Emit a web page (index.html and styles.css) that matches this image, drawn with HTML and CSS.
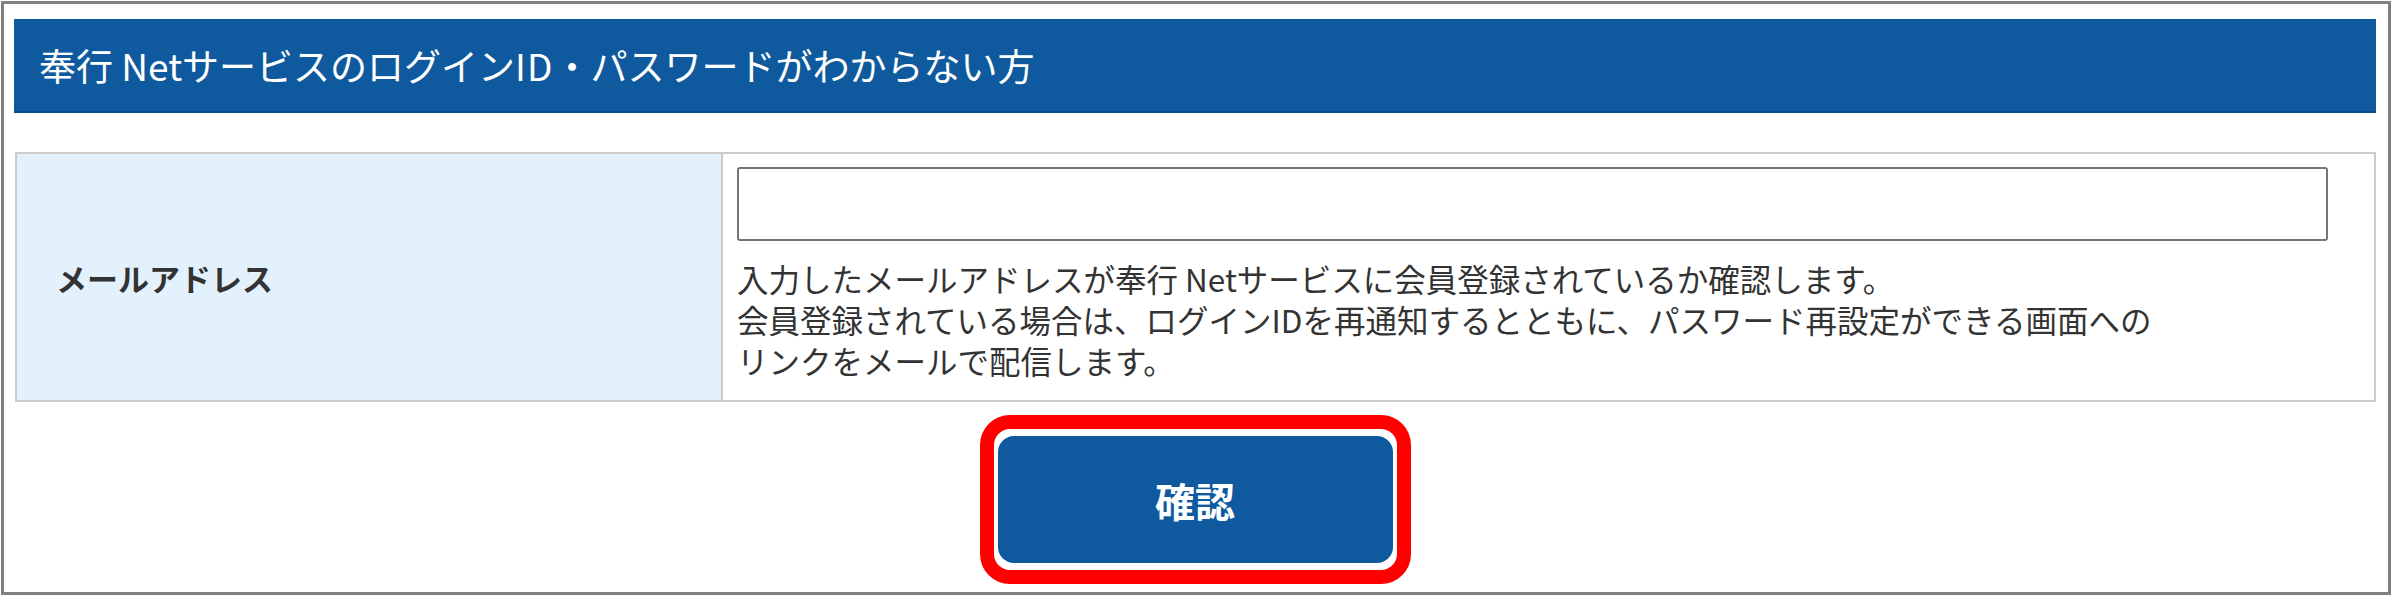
FILE: index.html
```html
<!DOCTYPE html>
<html lang="ja">
<head>
<meta charset="utf-8">
<title>ログインID・パスワードがわからない方</title>
<link rel="stylesheet" href="styles.css">
</head>
<body>
<div class="frame">
  <h2 class="title">奉行 Netサービスのログイン<span class="latin">ID</span>・パスワードがわからない方</h2>
  <div class="form-row">
    <div class="label">メールアドレス</div>
    <div class="value">
      <input class="email" type="text" aria-label="メールアドレス">
      <p class="help">入力したメールアドレスが奉行 Netサービスに会員登録されているか確認します。<br>会員登録されている場合は、ログインIDを再通知するとともに、パスワード再設定ができる画面への<br>リンクをメールで配信します。</p>
    </div>
  </div>
  <div class="actions">
    <div class="highlight">
      <button class="btn" type="button">確認</button>
    </div>
  </div>
</div>
</body>
</html>
```

FILE: styles.css
```css
html, body {
  margin: 0;
  padding: 0;
  background: #ffffff;
}
body {
  padding: 1px 0 0 1px;
  font-family: "Noto Sans CJK JP", "Noto Sans", sans-serif;
  color: #333333;
}
.frame {
  box-sizing: border-box;
  width: 2390px;
  height: 594px;
  border: 3px solid #808080;
  padding: 15px 12px 0 10px;
  background: #ffffff;
}
.title {
  margin: 0;
  height: 94px;
  box-sizing: border-box;
  padding-left: 25px;
  display: flex;
  align-items: center;
  background: #0f5a9e;
  border-bottom: 2px solid #0b4d8c;
  color: #ffffff;
  font-size: 37px;
  font-weight: normal;
  letter-spacing: 0;
  white-space: pre;
}
.latin {
  letter-spacing: 1px;
}
.form-row {
  margin: 39px 0 0 1px;
  display: grid;
  grid-template-columns: 706px 1fr;
  border: 2px solid #cccccc;
  height: 250px;
  box-sizing: border-box;
}
.label {
  background: #e3f1fd;
  border-right: 2px solid #cccccc;
  display: flex;
  align-items: center;
  padding-left: 39px;
  font-size: 31px;
  font-weight: bold;
  color: #333333;
}
.value {
  padding: 13px 46px 0 14px;
  display: flex;
  flex-direction: column;
}
.email {
  box-sizing: border-box;
  width: 100%;
  height: 74px;
  border: 2px solid #767676;
  border-radius: 3px;
  margin: 0;
  padding: 0 10px;
  font-size: 28px;
  background: #ffffff;
}
.help {
  margin: 17px 0 0;
  font-size: 31.5px;
  line-height: 41px;
  color: #333333;
}
.actions {
  display: flex;
  justify-content: center;
  margin-top: 13px;
}
.highlight {
  border: 14px solid #ff0000;
  border-radius: 30px;
  padding: 7px 4px;
}
.btn {
  display: flex;
  align-items: center;
  justify-content: center;
  width: 395px;
  height: 127px;
  border: none;
  border-radius: 16px;
  background: #0f5a9e;
  color: #ffffff;
  font-family: "Noto Sans CJK JP", "Noto Sans", sans-serif;
  font-size: 40px;
  font-weight: bold;
  padding: 0;
}
```
